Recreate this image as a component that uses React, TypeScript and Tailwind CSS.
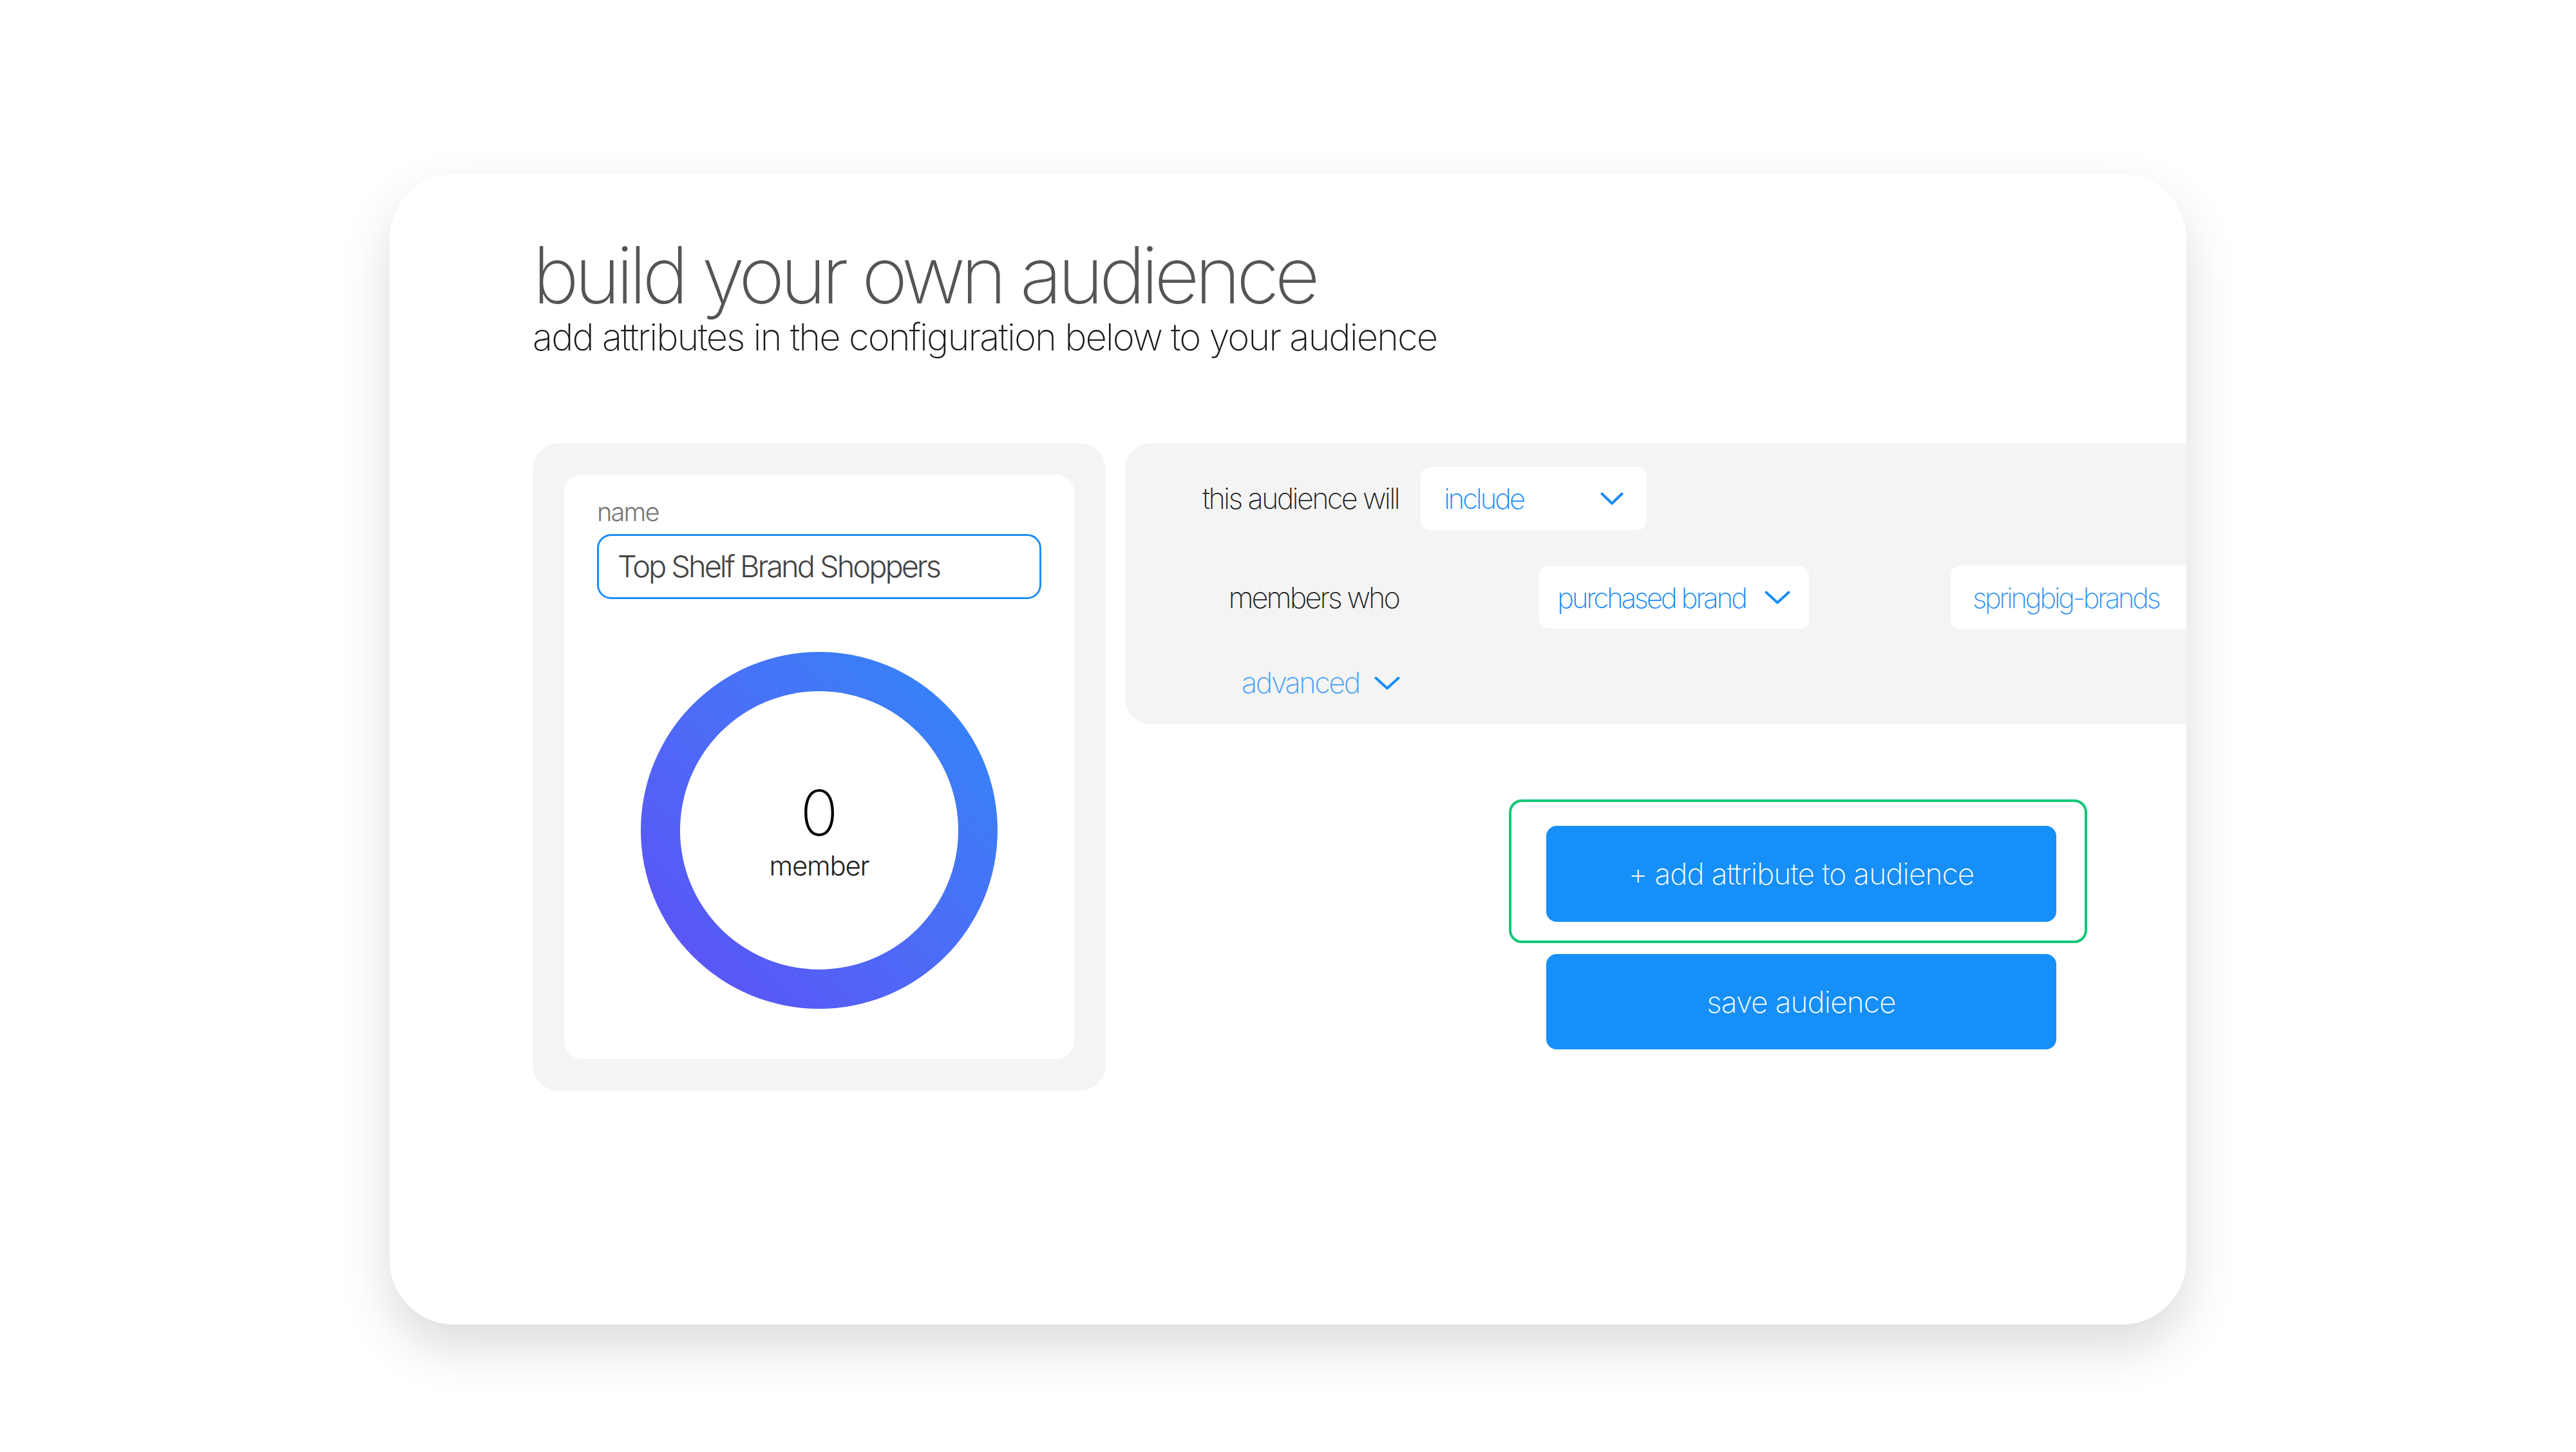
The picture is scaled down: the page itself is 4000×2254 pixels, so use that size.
import React from "react";

function Chevron({ w = 36, h = 20, className = "" }: { w?: number; h?: number; className?: string }) {
  return (
    <svg width={w} height={h} viewBox={`0 0 ${w} ${h}`} className={className} fill="none">
      <polyline
        points={`2.5,2.5 ${w / 2},${h - 2.5} ${w - 2.5},2.5`}
        stroke="currentColor"
        strokeWidth={4}
        strokeLinecap="round"
        strokeLinejoin="round"
      />
    </svg>
  );
}

export default function App() {
  return (
    <div className="w-[4000px] h-[2254px] bg-white font-['Inter','Roboto',sans-serif] pt-[270px] pl-[605px]">
      <div className="w-[2790px] h-[1786px] rounded-[100px] bg-white shadow-[0_36px_80px_rgba(0,0,0,0.14)] overflow-hidden pl-[222px] pt-[107px]">
        <h1 className="text-[122px] leading-[100px] font-extralight text-[#555] tracking-[-0.058em] whitespace-nowrap">
          build your own audience
        </h1>
        <p className="mt-[17px] text-[58px] leading-none font-extralight text-[#1a1a1a] tracking-[-0.035em] whitespace-nowrap">
          add attributes in the configuration below to your audience
        </p>

        <div className="mt-[136px] flex gap-[30px]">
          {/* left panel */}
          <div className="w-[890px] h-[1005px] shrink-0 rounded-[40px] bg-[#f4f4f4] p-[49px]">
            <div className="w-full h-full rounded-[28px] bg-white pt-[38px] px-[51px] flex flex-col">
              <div className="text-[40px] leading-none font-light text-[#777] tracking-[-0.05em]">name</div>
              <div className="mt-[14px] w-[690px] h-[101px] rounded-[22px] border-[3px] border-[#1e8ff5] flex items-center pl-[29px]">
                <span className="text-[47px] font-light text-[#444] tracking-[-0.065em] whitespace-nowrap">Top Shelf Brand Shoppers</span>
              </div>
              <div className="mt-[82px] self-center w-[554px] h-[554px] rounded-full bg-gradient-to-bl from-[#2a88f8] to-[#5d4cf5] flex items-center justify-center">
                <div className="w-[432px] h-[432px] rounded-full bg-white flex flex-col items-center justify-center">
                  <div className="text-[98px] leading-none font-extralight text-black">0</div>
                  <div className="mt-[12px] text-[42px] leading-none font-light text-[#222] tracking-[-0.03em]">member</div>
                </div>
              </div>
            </div>
          </div>

          {/* right column */}
          <div className="flex-1 min-w-0 flex flex-col">
            <div className="h-[436px] rounded-l-[40px] bg-[#f4f4f4] overflow-hidden pt-[37px]">
              <div className="flex items-center h-[98px]">
                <div className="w-[425px] shrink-0 text-right text-[45px] font-extralight text-[#1e1e1e] tracking-[-0.06em] whitespace-nowrap">
                  this audience will
                </div>
                <div className="ml-[34px] w-[351px] h-[98px] shrink-0 rounded-[15px] bg-white flex items-center justify-between pl-[36px] pr-[36px]">
                  <span className="text-[44px] font-extralight text-[#1a8cf8] tracking-[-0.075em] whitespace-nowrap">include</span>
                  <Chevron w={36} h={20} className="text-[#1a8cf8]" />
                </div>
              </div>
              <div className="mt-[56px] flex items-center h-[97px]">
                <div className="w-[425px] shrink-0 text-right text-[45px] font-extralight text-[#1e1e1e] tracking-[-0.065em] whitespace-nowrap">
                  members who
                </div>
                <div className="ml-[218px] w-[419px] h-[97px] shrink-0 rounded-[15px] bg-white flex items-center justify-between pl-[28px] pr-[29px]">
                  <span className="text-[44px] font-extralight text-[#1a8cf8] tracking-[-0.075em] whitespace-nowrap">purchased brand</span>
                  <Chevron w={40} h={21} className="text-[#1a8cf8]" />
                </div>
                <div className="ml-[220px] w-[420px] h-[99px] shrink-0 rounded-[15px] bg-white flex items-center pl-[34px]">
                  <span className="text-[44px] font-extralight text-[#3595f3] tracking-[-0.08em] whitespace-nowrap">springbig-brands</span>
                </div>
              </div>
              <div className="mt-[54px] h-[60px] flex items-center pl-[181px]">
                <span className="text-[45px] font-extralight text-[#45a1f5] tracking-[-0.055em] whitespace-nowrap">advanced</span>
                <Chevron w={40} h={21} className="ml-[23px] text-[#1a8cf8]" />
              </div>
            </div>

            <div className="ml-[596px] mt-[117px] w-[898px] flex flex-col">
              <div className="h-[223px] rounded-[20px] border-[4px] border-[#10c876] pt-[37px] pl-[54px]">
                <button className="w-[792px] h-[149px] rounded-[16px] bg-[#168ff8] text-white text-[46px] font-extralight tracking-[-0.02em] whitespace-nowrap">
                  + add attribute to audience
                </button>
              </div>
              <button className="mt-[17px] ml-[58px] w-[792px] h-[148px] rounded-[16px] bg-[#168ff8] text-white text-[46px] font-extralight tracking-[-0.02em] whitespace-nowrap">
                save audience
              </button>
            </div>
          </div>
        </div>
      </div>
    </div>
  );
}
